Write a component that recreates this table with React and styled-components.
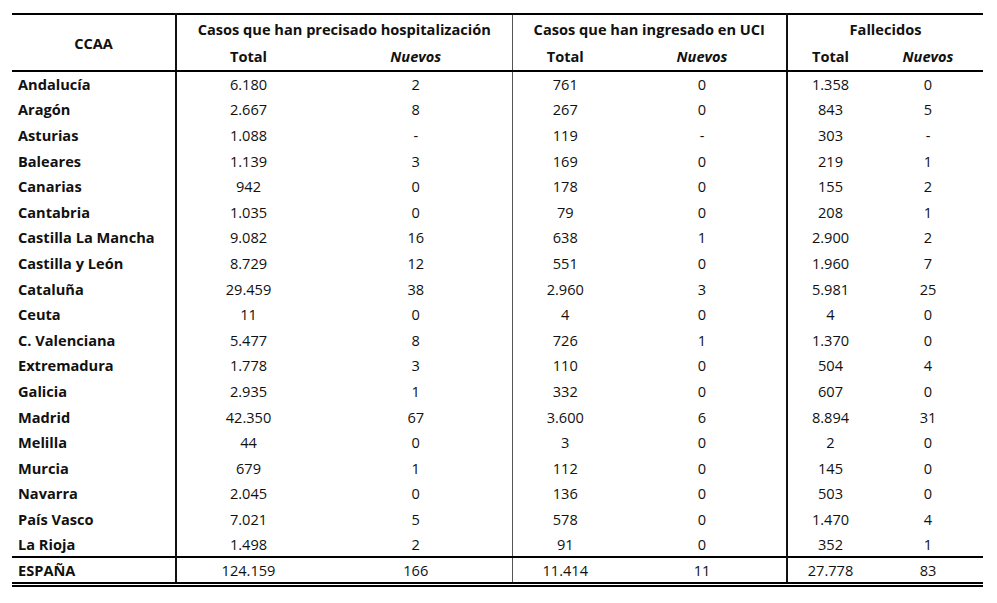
import React from "react";
import styled, { createGlobalStyle } from "styled-components";

const rows = [
  ["Andalucía", "6.180", "2", "761", "0", "1.358", "0"],
  ["Aragón", "2.667", "8", "267", "0", "843", "5"],
  ["Asturias", "1.088", "-", "119", "-", "303", "-"],
  ["Baleares", "1.139", "3", "169", "0", "219", "1"],
  ["Canarias", "942", "0", "178", "0", "155", "2"],
  ["Cantabria", "1.035", "0", "79", "0", "208", "1"],
  ["Castilla La Mancha", "9.082", "16", "638", "1", "2.900", "2"],
  ["Castilla y León", "8.729", "12", "551", "0", "1.960", "7"],
  ["Cataluña", "29.459", "38", "2.960", "3", "5.981", "25"],
  ["Ceuta", "11", "0", "4", "0", "4", "0"],
  ["C. Valenciana", "5.477", "8", "726", "1", "1.370", "0"],
  ["Extremadura", "1.778", "3", "110", "0", "504", "4"],
  ["Galicia", "2.935", "1", "332", "0", "607", "0"],
  ["Madrid", "42.350", "67", "3.600", "6", "8.894", "31"],
  ["Melilla", "44", "0", "3", "0", "2", "0"],
  ["Murcia", "679", "1", "112", "0", "145", "0"],
  ["Navarra", "2.045", "0", "136", "0", "503", "0"],
  ["País Vasco", "7.021", "5", "578", "0", "1.470", "4"],
  ["La Rioja", "1.498", "2", "91", "0", "352", "1"],
];

const total = ["ESPAÑA", "124.159", "166", "11.414", "11", "27.778", "83"];

// column widths, px
const widths = [164, 144, 192, 106, 169, 86, 110];

const GlobalStyle = createGlobalStyle`
  body {
    margin: 0;
    background: #fff;
  }
`;

const Page = styled.div`
  padding: 13px 0 0 12px;
  font-family: "Open Sans", "Liberation Sans", sans-serif;
  font-size: 14.6px;
  color: #111;
`;

const Table = styled.table`
  border-collapse: collapse;
  table-layout: fixed;
  width: 971px;
  border-top: 2px solid #000;
  border-bottom: 5px double #000;
`;

const HeadCell = styled.th`
  padding: 0;
  font-weight: 700;
  font-style: ${(p) => (p.$italic ? "italic" : "normal")};
  text-align: center;
  white-space: nowrap;
  height: ${(p) => p.$h || 27}px;
  border-left: ${(p) => p.$line || "none"};
  border-bottom: ${(p) => (p.$bottom ? "2px solid #000" : "none")};
`;

const Row = styled.tr`
  height: 25.6px;
  border-top: ${(p) => (p.$total ? "2px solid #000" : "none")};
  ${(p) => p.$total && "height: 27px;"}
`;

const NameCell = styled.td`
  padding: 0 0 0 6px;
  font-weight: 700;
  text-align: left;
  white-space: nowrap;
`;

const NumCell = styled.td`
  padding: 0;
  text-align: center;
  border-left: ${(p) => p.$line || "none"};
`;

const thick = "2px solid #111";
const thin = "1px solid #555";

// left border for each numeric column
const lineFor = (i) => (i === 1 || i === 5 ? thick : i === 3 ? thin : "none");

const DataRow = ({ cells, isTotal }) => (
  <Row $total={isTotal}>
    <NameCell>{cells[0]}</NameCell>
    {cells.slice(1).map((v, i) => (
      <NumCell key={i} $line={lineFor(i + 1)}>
        {v}
      </NumCell>
    ))}
  </Row>
);

const App = () => (
  <Page>
    <GlobalStyle />
    <Table>
      <colgroup>
        {widths.map((w, i) => (
          <col key={i} style={{ width: w }} />
        ))}
      </colgroup>
      <thead>
        <tr>
          <HeadCell rowSpan={2} $h={55} $bottom>
            CCAA
          </HeadCell>
          <HeadCell colSpan={2} $line={thick}>
            Casos que han precisado hospitalización
          </HeadCell>
          <HeadCell colSpan={2} $line={thin}>
            Casos que han ingresado en UCI
          </HeadCell>
          <HeadCell colSpan={2} $line={thick}>
            Fallecidos
          </HeadCell>
        </tr>
        <tr>
          <HeadCell $h={28} $bottom $line={thick}>Total</HeadCell>
          <HeadCell $h={28} $bottom $italic>Nuevos</HeadCell>
          <HeadCell $h={28} $bottom $line={thin}>Total</HeadCell>
          <HeadCell $h={28} $bottom $italic>Nuevos</HeadCell>
          <HeadCell $h={28} $bottom $line={thick}>Total</HeadCell>
          <HeadCell $h={28} $bottom $italic>Nuevos</HeadCell>
        </tr>
      </thead>
      <tbody>
        {rows.map((r) => (
          <DataRow key={r[0]} cells={r} />
        ))}
        <DataRow cells={total} isTotal />
      </tbody>
    </Table>
  </Page>
);

export default App;
